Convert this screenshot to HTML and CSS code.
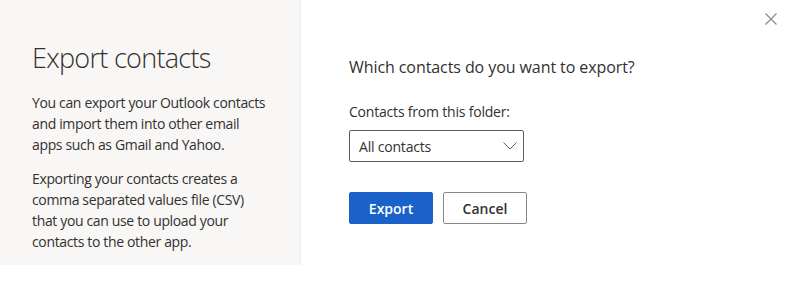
FILE: index.html
```html
<!DOCTYPE html>
<html lang="en">
<head>
    <meta charset="UTF-8">
    <title>Export contacts</title>
    <link rel="stylesheet" href="styles.css">
</head>
<body>

<div class="dialog">
    <div class="sidePanel">
        <h1 class="title">Export contacts</h1>
        <p class="info">You can export your Outlook contacts and import them into other email apps such as Gmail and Yahoo.</p>
        <p class="info">Exporting your contacts creates a comma separated values file (CSV) that you can use to upload your contacts to the other app.</p>
    </div>

    <div class="mainPanel">
        <h2 class="question">Which contacts do you want to export?</h2>
        <label class="fieldLabel">Contacts from this folder:</label>
        <div class="dropdown">
            <span>All contacts</span>
            <svg width="14" height="8" viewBox="0 0 14 8"><path d="M0.5 0.5 L7 7 L13.5 0.5" fill="none" stroke="#605e5c" stroke-width="1"/></svg>
        </div>
        <div class="actions">
            <button class="btn btnPrimary">Export</button>
            <button class="btn">Cancel</button>
        </div>
    </div>

    <button class="closeBtn" aria-label="Close">
        <svg width="12" height="12" viewBox="0 0 12 12"><path d="M0.5 0.5 L11.5 11.5 M11.5 0.5 L0.5 11.5" stroke="#8a8886" stroke-width="1.2"/></svg>
    </button>
</div>

</body>
</html>
```

FILE: styles.css
```css
body {
    margin: 0;
    background: #fff;
    font-family: "Open Sans", "Noto Sans", sans-serif;
    color: #323130;
}

.dialog {
    position: relative;
    display: flex;
    width: 800px;
    height: 301px;
}

.sidePanel {
    box-sizing: border-box;
    width: 301px;
    height: 265px;
    padding: 38px 32px 0 32px;
    background: #f8f7f5;
    border-right: 1px solid #edebe9;
}

.title {
    margin: 0 0 14px 0;
    font-size: 27px;
    font-weight: 300;
    line-height: 40px;
    letter-spacing: -0.7px;
}

.info {
    margin: 0 0 13px 0;
    font-size: 14px;
    line-height: 21px;
    letter-spacing: -0.35px;
}

.mainPanel {
    padding: 55px 0 0 48px;
    display: flex;
    flex-direction: column;
    align-items: flex-start;
}

.question {
    margin: 0 0 23px 0;
    font-size: 16px;
    font-weight: 400;
    line-height: 24px;
    letter-spacing: -0.08px;
}

.fieldLabel {
    font-size: 14px;
    line-height: 20px;
    margin-bottom: 8px;
    letter-spacing: -0.2px;
}

.dropdown {
    box-sizing: border-box;
    width: 175px;
    height: 32px;
    padding: 0 6px 0 9px;
    display: flex;
    align-items: center;
    justify-content: space-between;
    border: 1px solid #605e5c;
    border-radius: 2px;
    font-size: 14px;
    letter-spacing: -0.2px;
}

.actions {
    display: flex;
    gap: 10px;
    margin-top: 30px;
}

.btn {
    box-sizing: border-box;
    width: 84px;
    height: 32px;
    font-family: inherit;
    font-size: 14px;
    font-weight: 600;
    color: #323130;
    background: #fff;
    border: 1px solid #8a8886;
    border-radius: 2px;
}

.btnPrimary {
    background: #1a62c9;
    border-color: #1a62c9;
    color: #fff;
}

.closeBtn {
    position: absolute;
    top: 13px;
    right: 23px;
    padding: 0;
    border: none;
    background: none;
    line-height: 0;
}
```
